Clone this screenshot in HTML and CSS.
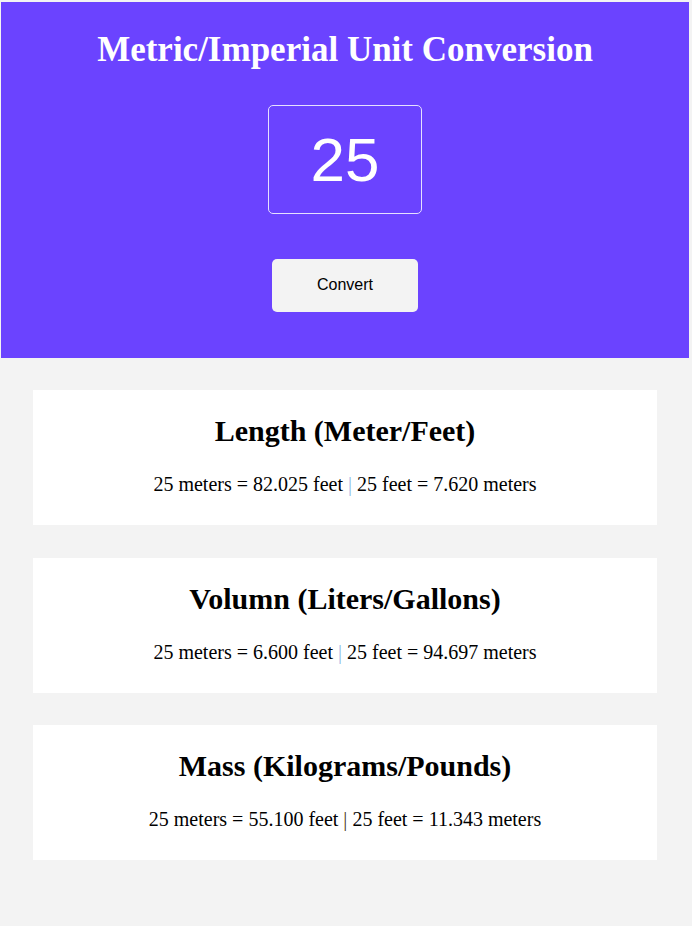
FILE: index.html
```html
<!DOCTYPE html>
<html lang="en">
<head>
<meta charset="utf-8">
<title>Metric/Imperial Unit Conversion</title>
<link rel="stylesheet" href="styles.css">
</head>
<body>
  <header class="hero">
    <h1 class="hero-title">Metric/Imperial Unit Conversion</h1>
    <div class="input-box">25</div>
    <button class="convert-btn" type="button">Convert</button>
  </header>
  <main class="results">
    <section class="card">
      <h2 class="card-title">Length (Meter/Feet)</h2>
      <p class="card-text">25 meters = 82.025 feet <span class="sep sep-light">|</span> 25 feet = 7.620 meters</p>
    </section>
    <section class="card">
      <h2 class="card-title">Volumn (Liters/Gallons)</h2>
      <p class="card-text">25 meters = 6.600 feet <span class="sep sep-light">|</span> 25 feet = 94.697 meters</p>
    </section>
    <section class="card">
      <h2 class="card-title">Mass (Kilograms/Pounds)</h2>
      <p class="card-text">25 meters = 55.100 feet <span class="sep sep-dark">|</span> 25 feet = 11.343 meters</p>
    </section>
  </main>
</body>
</html>
```

FILE: styles.css
```css
html, body {
  margin: 0;
  padding: 0;
}
body {
  background: #f3f3f3;
  font-family: "Liberation Serif", "Times New Roman", serif;
  min-height: 926px;
  padding-top: 2px;
  box-sizing: border-box;
}
.hero {
  background: #6b43ff;
  margin: 0 3px 0 1px;
  height: 356px;
  box-sizing: border-box;
  display: flex;
  flex-direction: column;
  align-items: center;
  padding-top: 28px;
}
.hero-title {
  margin: 0;
  color: #ffffff;
  font-size: 35px;
  font-weight: bold;
  line-height: 40px;
}
.input-box {
  margin-top: 35px;
  width: 154px;
  height: 109px;
  box-sizing: border-box;
  border: 1px solid #e6e0ff;
  border-radius: 5px;
  display: flex;
  align-items: center;
  justify-content: center;
  color: #ffffff;
  font-family: "Liberation Sans", Arial, sans-serif;
  font-size: 62px;
}
.convert-btn {
  margin-top: 45px;
  width: 146px;
  height: 53px;
  border: none;
  border-radius: 5px;
  background: #f3f3f3;
  color: #000000;
  font-family: "Liberation Sans", Arial, sans-serif;
  font-size: 16px;
  padding: 0 0 2px;
}
.results {
  display: flex;
  flex-direction: column;
  gap: 32.5px;
  padding: 32px 35px 0 33px;
}
.card {
  background: #ffffff;
  height: 135px;
  box-sizing: border-box;
  display: flex;
  flex-direction: column;
  align-items: center;
  padding-top: 23px;
}
.card-title {
  margin: 0;
  font-size: 30px;
  font-weight: bold;
  line-height: 36px;
}
.card-text {
  margin: 24px 0 0;
  font-size: 20px;
  line-height: 22px;
}
.sep-light {
  color: #8fbbe6;
}
.sep-dark {
  color: #4a3a20;
}
```
